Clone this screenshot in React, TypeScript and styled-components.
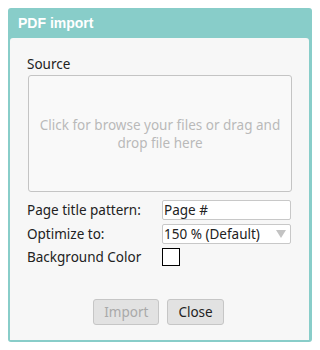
import React from "react";
import styled, { createGlobalStyle } from "styled-components";

const Global = createGlobalStyle`
  html, body { margin: 0; padding: 0; background: #ffffff; }
  body { font-family: "Noto Sans", "Liberation Sans", Arial, sans-serif; }
  * { box-sizing: border-box; }
`;

const Page = styled.div`
  width: 320px;
  height: 350px;
  padding: 8px;
`;

const Dialog = styled.div`
  width: 304px;
  height: 334px;
  background: #88cdc9;
  border-radius: 3px;
  padding: 0 3px 2px 2px;
  display: flex;
  flex-direction: column;
`;

const Header = styled.div`
  height: 30px;
  display: flex;
  align-items: center;
  padding-left: 8px;
  color: #ffffff;
  font-family: "Liberation Sans", Arial, sans-serif;
  font-weight: bold;
  font-size: 14px;
`;

const Body = styled.div`
  flex: 1;
  background: #f7f7f7;
  border-radius: 3px 3px 0 0;
  padding: 18px 18px 0 17px;
  display: flex;
  flex-direction: column;
  color: #222;
  font-size: 13.5px;
`;

const Label = styled.div`
  font-size: 13.5px;
  line-height: 16px;
  color: #222;
  white-space: nowrap;
`;

const DropZone = styled.div`
  margin: 3px 0 0 1px;
  width: 264px;
  height: 117px;
  border: 1px solid #c4c4c4;
  border-radius: 3px;
  background: #f9f9f9;
  display: flex;
  align-items: center;
  justify-content: center;
  text-align: center;
  color: #b9b9b9;
  font-size: 13.5px;
  line-height: 18px;
  padding: 0 6px;
`;

const Grid = styled.div`
  margin-top: 8px;
  display: grid;
  grid-template-columns: 135px 129px;
  row-gap: 4px;
  align-items: center;
`;

const Input = styled.div`
  height: 20px;
  border: 1px solid #c8c8c8;
  border-radius: 2px;
  background: #fff;
  font-size: 13.5px;
  line-height: 18px;
  padding-left: 1px;
  color: #222;
  white-space: nowrap;
`;

const Select = styled(Input)`
  display: flex;
  justify-content: space-between;
  align-items: center;
  padding-right: 4px;
`;

const Arrow = styled.span`
  width: 0;
  height: 0;
  border-left: 5px solid transparent;
  border-right: 5px solid transparent;
  border-top: 8px solid #c3c3c3;
`;

const Check = styled.div`
  width: 18px;
  height: 18px;
  border: 1px solid #000;
  background: #fff;
`;

const Buttons = styled.div`
  margin-top: auto;
  margin-bottom: 15px;
  display: flex;
  justify-content: center;
  gap: 8px;
  padding-right: 1px;
`;

const Button = styled.div<{ $disabled?: boolean }>`
  height: 26px;
  padding: 0 10px;
  border: 1px solid #c6c6c6;
  border-radius: 3px;
  background: #e2e2e2;
  color: ${(p) => (p.$disabled ? "#a9a9a9" : "#222")};
  font-size: 13.5px;
  display: flex;
  align-items: center;
`;

export default function App() {
  return (
    <>
      <Global />
      <Page>
        <Dialog>
          <Header>PDF import</Header>
          <Body>
            <Label>Source</Label>
            <DropZone>Click for browse your files or drag and drop file here</DropZone>
            <Grid>
              <Label>Page title pattern:</Label>
              <Input>Page #</Input>
              <Label>Optimize to:</Label>
              <Select>
                <span>150 % (Default)</span>
                <Arrow />
              </Select>
              <Label>Background Color</Label>
              <Check />
            </Grid>
            <Buttons>
              <Button $disabled>Import</Button>
              <Button>Close</Button>
            </Buttons>
          </Body>
        </Dialog>
      </Page>
    </>
  );
}
